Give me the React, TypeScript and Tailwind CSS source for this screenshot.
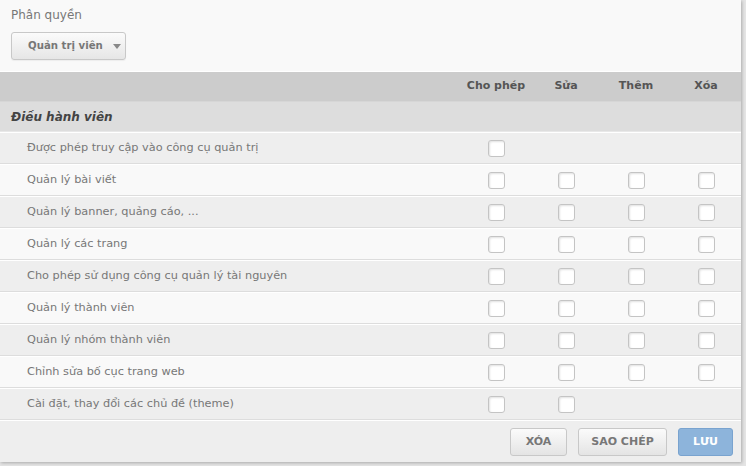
import React from "react";

type Perm = { label: string; cols: boolean[] };

const PERMS: Perm[] = [
  { label: "Được phép truy cập vào công cụ quản trị", cols: [true, false, false, false] },
  { label: "Quản lý bài viết", cols: [true, true, true, true] },
  { label: "Quản lý banner, quảng cáo, ...", cols: [true, true, true, true] },
  { label: "Quản lý các trang", cols: [true, true, true, true] },
  { label: "Cho phép sử dụng công cụ quản lý tài nguyên", cols: [true, true, true, true] },
  { label: "Quản lý thành viên", cols: [true, true, true, true] },
  { label: "Quản lý nhóm thành viên", cols: [true, true, true, true] },
  { label: "Chỉnh sửa bố cục trang web", cols: [true, true, true, true] },
  { label: "Cài đặt, thay đổi các chủ đề (theme)", cols: [true, true, false, false] },
];

const HEADERS = ["Cho phép", "Sửa", "Thêm", "Xóa"];

function Box() {
  return (
    <span className="block w-[17px] h-[17px] rounded-[3px] border border-[#c4c4c4] bg-white shadow-[inset_1px_1px_2px_rgba(0,0,0,0.12)]" />
  );
}

export default function App() {
  return (
    <div
      className="w-[746px] h-[466px] bg-[#e4e4e4] overflow-hidden text-[11px]"
      style={{ fontFamily: '"DejaVu Sans", Verdana, sans-serif' }}
    >
      <div className="w-[741px] h-[462px] bg-[#eeeeee] shadow-[1px_1px_3px_rgba(0,0,0,0.25)] flex flex-col">
        {/* role picker */}
        <div className="h-[72px] shrink-0 bg-[#f9f9f9] border-b border-white px-[11px] pt-[7px]">
          <div className="text-[12px] text-[#777] leading-[16px]">Phân quyền</div>
          <button className="mt-[9px] h-[28px] w-[115px] flex items-center gap-[10px] pl-[16px] rounded-[3px] border border-[#c8c8c8] bg-gradient-to-b from-[#fbfbfb] to-[#e6e6e6] text-[10.2px] font-bold text-[#777] shadow-[0_1px_1px_rgba(0,0,0,0.05)]">
            <span>Quản trị viên</span>
            <span className="w-0 h-0 border-l-[4px] border-r-[4px] border-t-[5px] border-l-transparent border-r-transparent border-t-[#888]" />
          </button>
        </div>

        {/* column headers */}
        <div className="h-[30px] shrink-0 bg-[#cccccc] grid grid-cols-[1fr_70px_70px_70px_70px] items-center font-bold text-[#555] border-b border-[#d6d6d6]">
          <span />
          {HEADERS.map((h) => (
            <span key={h} className="text-center">
              {h}
            </span>
          ))}
        </div>

        {/* group */}
        <div className="h-[30px] shrink-0 bg-[#dddddd] flex items-center px-[11px] text-[12px] font-bold italic text-[#444] border-b border-[#e8e8e8]">
          Điều hành viên
        </div>

        {PERMS.map((p, i) => (
          <div
            key={p.label}
            className={`h-[32px] shrink-0 grid grid-cols-[1fr_70px_70px_70px_70px] items-center border-t border-white border-b border-b-[#dddddd] ${
              i % 2 === 0 ? "bg-[#eeeeee]" : "bg-[#f9f9f9]"
            }`}
          >
            <span className="pl-[27px] text-[11.3px] text-[#777]">{p.label}</span>
            {p.cols.map((c, j) => (
              <span key={j} className="flex justify-center">
                {c && <Box />}
              </span>
            ))}
          </div>
        ))}

        {/* actions */}
        <div className="flex-1 border-t border-white flex items-start justify-end gap-[11px] pt-[7px] pr-[8px] text-[11px] font-bold">
          <button className="h-[28px] w-[57px] rounded-[3px] border border-[#c8c8c8] bg-gradient-to-b from-[#fbfbfb] to-[#e4e4e4] text-[#777]">
            XÓA
          </button>
          <button className="h-[28px] w-[89px] rounded-[3px] border border-[#c8c8c8] bg-gradient-to-b from-[#fbfbfb] to-[#e4e4e4] text-[#777]">
            SAO CHÉP
          </button>
          <button className="h-[28px] w-[55px] rounded-[3px] border border-[#79a3cf] bg-[#8db4db] text-white">
            LƯU
          </button>
        </div>
      </div>
    </div>
  );
}
